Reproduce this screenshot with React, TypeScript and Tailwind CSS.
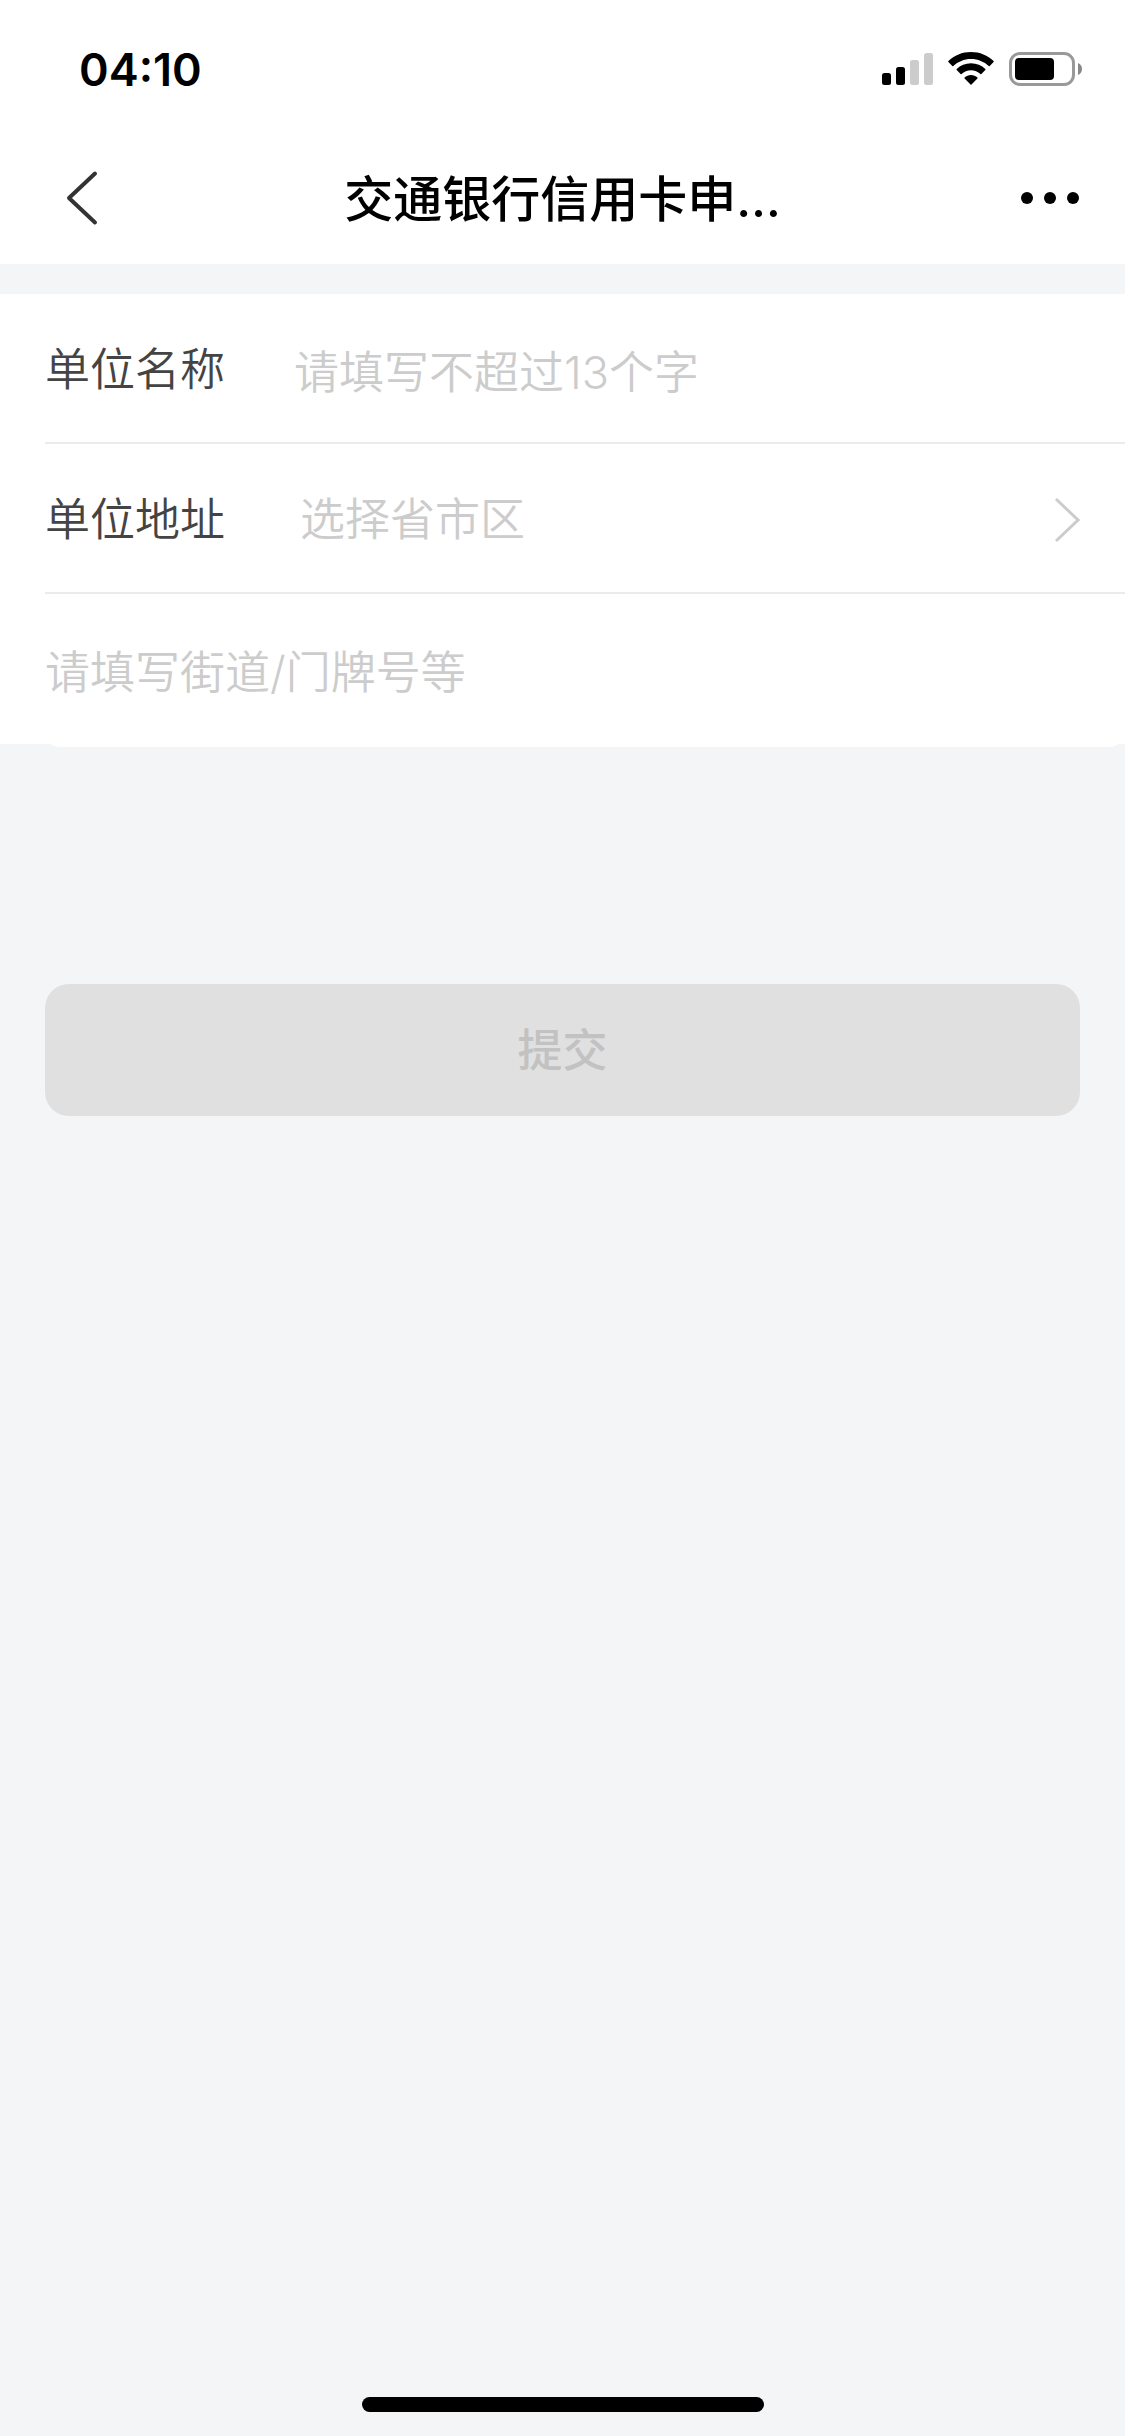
import { useState } from "react";

const PROVINCES = ["北京市", "上海市", "广东省", "江苏省", "浙江省"];

function StatusBar() {
  return (
    <div className="flex h-[132px] items-center justify-between pt-1.5 pl-[79px] pr-[42px]">
      <span className="text-[45px] leading-none font-semibold">04:10</span>
      <div className="flex items-center gap-[15px]">
        <svg width="51" height="34" viewBox="0 0 51 34" aria-hidden="true">
          <rect x="0" y="21" width="9" height="12" rx="2.5" />
          <rect x="14" y="15" width="9" height="18" rx="2.5" />
          <rect x="28" y="8" width="9" height="25" rx="2.5" fill="#cccccc" />
          <rect x="42" y="1" width="9" height="32" rx="2.5" fill="#cccccc" />
        </svg>
        <svg width="46" height="34" viewBox="0 0 46 34" aria-hidden="true">
          <path d="M23 0C14.200 0 6.200 3.400 0.400 9Q0 9.500 0.400 10L4.300 14Q4.800 14.400 5.300 14C9.900 9.700 16.100 7 23 7S36.100 9.700 40.700 14Q41.200 14.400 41.700 14L45.600 10Q46 9.500 45.600 9C39.800 3.400 31.800 0 23 0Z" />
          <path d="M23 11.300C17.400 11.300 12.400 13.500 8.700 17Q8.200 17.500 8.700 18L12.600 22Q13.100 22.400 13.600 22C16.100 19.700 19.400 18.300 23 18.300S29.900 19.700 32.400 22Q32.900 22.400 33.400 22L37.300 18Q37.800 17.500 37.300 17C33.600 13.500 28.600 11.300 23 11.300Z" />
          <path d="M23 23C20.500 23 18.300 23.900 16.600 25.500Q16.100 26 16.600 26.500L22.500 32.500Q23 33 23.500 32.500L29.400 26.500Q29.900 26 29.400 25.500C27.700 23.900 25.500 23 23 23Z" />
        </svg>
        <svg width="74" height="34" viewBox="0 0 74 34" aria-hidden="true">
          <rect x="1.500" y="1.500" width="63" height="31" rx="9.500" fill="none" stroke="#999999" strokeWidth="3" />
          <rect x="6" y="6" width="39" height="22" rx="4" />
          <path d="M69 11C71.500 12 73 14.300 73 17S71.500 22 69 23Z" fill="#888888" />
        </svg>
      </div>
    </div>
  );
}

function NavBar() {
  return (
    <header className="grid h-[132px] grid-cols-[1fr_auto_1fr] items-center px-[46px]">
      <button type="button" aria-label="返回" className="justify-self-start pl-[19px]">
        <svg width="34" height="56" viewBox="0 0 34 56" fill="none" stroke="#333333" strokeWidth="4" strokeLinecap="round" strokeLinejoin="round">
          <path d="M30 3.500L4 28L30 52.500" />
        </svg>
      </button>
      <h1 className="pt-0.5 text-[49px] leading-none font-medium">交通银行信用卡申…</h1>
      <button type="button" aria-label="更多" className="flex gap-[11px] justify-self-end">
        <span className="size-3 rounded-full bg-black" />
        <span className="size-3 rounded-full bg-black" />
        <span className="size-3 rounded-full bg-black" />
      </button>
    </header>
  );
}

export default function App() {
  const [company, setCompany] = useState("");
  const [region, setRegion] = useState("");
  const [street, setStreet] = useState("");

  return (
    <div className="flex min-h-screen flex-col bg-[#f3f5f7] font-['Inter','Noto_Sans_CJK_SC',sans-serif] text-black">
      <div className="bg-white">
        <StatusBar />
        <NavBar />
      </div>

      <form className="mt-[30px] flex flex-1 flex-col text-[45px]" onSubmit={(e) => e.preventDefault()}>
        <div className="bg-white pl-[45px] font-[350]">
          <div className="flex h-[150px] items-center border-b-2 border-[#ebebeb] pt-1">
            <label htmlFor="company" className="w-[249px] shrink-0 text-[#444444]">单位名称</label>
            <input
              id="company"
              value={company}
              onChange={(e) => setCompany(e.target.value)}
              placeholder="请填写不超过13个字"
              maxLength={13}
              className="h-full min-w-0 flex-1 pt-1 outline-none placeholder:text-[#cccccc]"
            />
          </div>

          <div className="flex h-[150px] items-center border-b-2 border-[#ebebeb] pt-1 pr-[45px]">
            <label htmlFor="region" className="w-[255px] shrink-0 text-[#444444]">单位地址</label>
            <select
              id="region"
              value={region}
              onChange={(e) => setRegion(e.target.value)}
              className="h-full min-w-0 flex-1 appearance-none bg-transparent text-[#cccccc] outline-none"
            >
              <option value="">选择省市区</option>
              {PROVINCES.map((name) => (
                <option key={name} value={name}>{name}</option>
              ))}
            </select>
            <svg width="26" height="46" viewBox="0 0 26 46" fill="none" stroke="#cccccc" strokeWidth="3" aria-hidden="true">
              <path d="M2 2L24 23L2 44" />
            </svg>
          </div>

          {/* last field hangs slightly below the card */}
          <div className="-mb-[3px] h-[153px] rounded-b-[15px] bg-white">
            <input
              aria-label="详细地址"
              value={street}
              onChange={(e) => setStreet(e.target.value)}
              placeholder="请填写街道/门牌号等"
              className="h-full w-full pt-1 outline-none placeholder:text-[#cccccc]"
            />
          </div>
        </div>

        <div className="mt-60 px-[45px]">
          <button type="submit" disabled className="h-[132px] w-full rounded-3xl bg-[#e0e0e0] pt-0.5 font-medium text-[#c2c2c2]">
            提交
          </button>
        </div>
      </form>

      <div className="mx-auto mb-6 h-[15px] w-[402px] rounded-full bg-black" />
    </div>
  );
}
